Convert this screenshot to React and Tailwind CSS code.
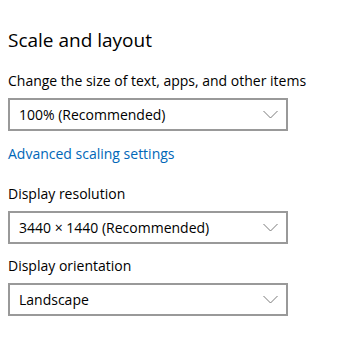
function Chevron() {
  return (
    <svg width="15" height="9" viewBox="0 0 15 9" className="text-[#7a7a7a]">
      <path d="M0.5 1 L7.5 8 L14.5 1" fill="none" stroke="currentColor" strokeWidth="1" />
    </svg>
  );
}

function Combo({ value }) {
  return (
    <div className="w-[280px] h-[33px] border-2 border-[#999999] flex items-center justify-between pl-[9px] pr-[8px] text-[14px] text-black">
      <span>{value}</span>
      <Chevron />
    </div>
  );
}

export default function App() {
  return (
    <div
      className="w-[361px] h-[344px] bg-white px-2 pt-[26px] text-black"
      style={{ fontFamily: '"Open Sans", "Noto Sans", sans-serif' }}
    >
      <h2 className="text-[19px] leading-[28px] font-normal">Scale and layout</h2>
      <p className="mt-[17px] text-[14px] leading-[20px]">Change the size of text, apps, and other items</p>
      <div className="mt-[7px]">
        <Combo value="100% (Recommended)" />
      </div>
      <a className="block mt-[13px] text-[14px] leading-[20px] text-[#0067b8]">Advanced scaling settings</a>
      <p className="mt-[20px] text-[14px] leading-[20px]">Display resolution</p>
      <div className="mt-[7px]">
        <Combo value="3440 × 1440 (Recommended)" />
      </div>
      <p className="mt-[12px] text-[14px] leading-[20px]">Display orientation</p>
      <div className="mt-[7px]">
        <Combo value="Landscape" />
      </div>
    </div>
  );
}
